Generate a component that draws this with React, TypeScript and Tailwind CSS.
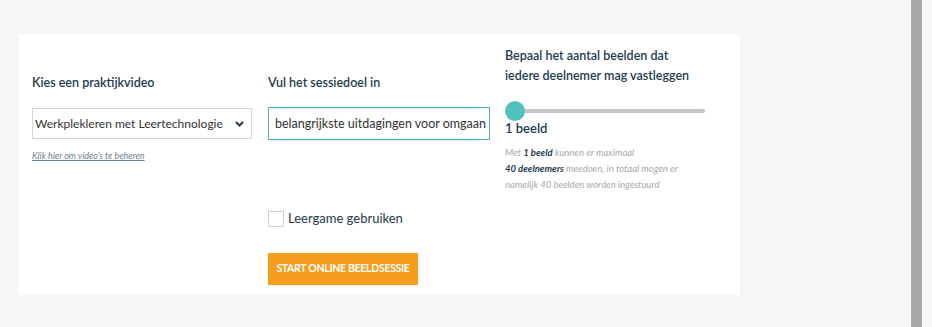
import { useState } from "react";

const FONT = { fontFamily: "Lato, 'Open Sans', sans-serif" };

export default function App() {
  const [goal, setGoal] = useState("belangrijkste uitdagingen voor omgaan");
  const [count, setCount] = useState(1);

  return (
    <div className="flex h-[327px] w-[932px] overflow-hidden bg-[#f6f6f6] text-[#223b4e]" style={FONT}>
      <div className="flex-1 pl-[19px] pt-[34px]">
        <div className="flex h-[261px] w-[721px] bg-white pl-[13px] pt-[12px]">
          {/* Video column */}
          <div className="flex w-[236px] flex-col">
            <div className="flex h-[47px] items-end text-[12.5px] font-semibold leading-[20px]">
              Kies een praktijkvideo
            </div>
            <div className="relative mt-[15px] h-[31px] w-[220px] border border-[#d6d6d6]">
              <select className="h-full w-full appearance-none bg-white pl-[2px] pr-[20px] text-[12px] text-[#333] outline-none">
                <option>Werkplekleren met Leertechnologie</option>
              </select>
              <svg className="pointer-events-none absolute right-[7px] top-[12px]" width="9" height="6" viewBox="0 0 9 6">
                <path d="M1 1 L4.5 4.5 L8 1" fill="none" stroke="#223b4e" strokeWidth="2" />
              </svg>
            </div>
            <a className="mt-[10px] text-[9px] italic text-[#6b7f90] underline">Klik hier om video's te beheren</a>
          </div>

          {/* Goal column */}
          <div className="flex w-[237px] flex-col">
            <div className="flex h-[47px] items-end text-[12.5px] font-semibold leading-[20px]">
              Vul het sessiedoel in
            </div>
            <input
              value={goal}
              onChange={(e) => setGoal(e.target.value)}
              className="mt-[14px] h-[33px] w-[222px] border border-[#4fb8b0] pl-[6px] pr-[2px] text-[12.5px] text-[#333] outline-none"
            />
            <label className="mt-[69px] flex items-center gap-[4px] text-[13px]">
              <span className="h-[16px] w-[16px] border border-[#cfcfcf] bg-white" />
              Leergame gebruiken
            </label>
            <button className="mt-[24px] h-[32px] w-[150px] bg-[#f59d1b] text-[10.5px] font-bold uppercase tracking-[-0.3px] text-white">
              Start online beeldsessie
            </button>
          </div>

          {/* Count column */}
          <div className="flex w-[200px] flex-col">
            <div className="text-[12.5px] font-semibold leading-[19.5px]">
              Bepaal het aantal beelden dat
              <br />
              iedere deelnemer mag vastleggen
            </div>
            <div className="relative mt-[16px] h-[20px] w-[200px]">
              <div className="absolute left-[10px] right-0 top-[8px] h-[4px] rounded bg-[#c6c6c6]" />
              <div className="absolute left-0 top-0 h-[20px] w-[20px] rounded-full bg-[#4fc3bb]" />
            </div>
            <div className="mt-[-2px] text-[13px] font-semibold">{count} beeld</div>
            <div className="mt-[6px] text-[9.5px] italic leading-[16px] text-[#a9a9a9]" onClick={() => setCount(count)}>
              Met <b className="text-[#223b4e]">1 beeld</b> kunnen er maximaal
              <br />
              <b className="text-[#223b4e]">40 deelnemers</b> meedoen, in totaal mogen er
              <br />
              namelijk 40 beelden worden ingestuurd
            </div>
          </div>
        </div>
      </div>
      {/* scrollbar */}
      <div className="flex w-[21px] bg-[#f6f6f6]">
        <div className="w-[11px] bg-[#a9a9a9]" />
      </div>
    </div>
  );
}
